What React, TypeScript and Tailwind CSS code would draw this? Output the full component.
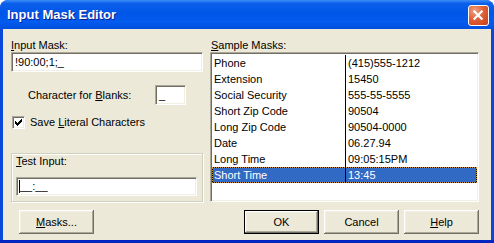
import React from "react";

const sunken =
  "bg-white border border-t-[#ACA899] border-l-[#ACA899] border-r-white border-b-white shadow-[inset_1px_1px_0_#716F64,inset_-1px_-1px_0_#F1EFE2]";

const btnShadow =
  "shadow-[inset_-1px_-1px_0_#716F64,inset_1px_1px_0_#FFFFFF,inset_-2px_-2px_0_#ACA899,inset_2px_2px_0_#F1EFE2]";

function Btn({ children, def = false }: { children: React.ReactNode; def?: boolean }) {
  return (
    <div
      className={
        "w-[75px] h-[24px] bg-[#ECE9D8] flex items-center justify-center text-black " +
        (def ? "border border-black " : "") +
        btnShadow
      }
    >
      <span className="leading-[13px]">{children}</span>
    </div>
  );
}

const rows: [string, string][] = [
  ["Phone", "(415)555-1212"],
  ["Extension", "15450"],
  ["Social Security", "555-55-5555"],
  ["Short Zip Code", "90504"],
  ["Long Zip Code", "90504-0000"],
  ["Date", "06.27.94"],
  ["Long Time", "09:05:15PM"],
  ["Short Time", "13:45"],
];

export default function App() {
  return (
    <div className="w-[494px] h-[243px] bg-[#0A48DC] rounded-t-[8px] flex flex-col overflow-hidden font-['Liberation_Sans',Arial,sans-serif] text-[11px] leading-[13px] text-black border-b-[3px] border-b-[#0026C2]">
      {/* Title bar */}
      <div className="h-[29px] shrink-0 flex items-center justify-between pl-[7px] pr-[5px] bg-[linear-gradient(to_bottom,#3D8EF6_0%,#0B5FEA_12%,#0056E6_45%,#035BEF_75%,#0250DE_100%)]">
        <span className="text-white font-bold text-[13px] leading-[16px] pt-[1px] [text-shadow:1px_1px_0_#0B1F8E]">
          Input Mask Editor
        </span>
        <div className="w-[21px] h-[21px] mt-[1px] rounded-[3px] border border-white bg-[radial-gradient(circle_at_30%_25%,#F0A080_0%,#E0603A_45%,#C2401A_100%)] flex items-center justify-center">
          <svg width="21" height="21" viewBox="0 0 21 21">
            <path d="M6 6 L14 14 M14 6 L6 14" stroke="#fff" strokeWidth="2.4" strokeLinecap="square" />
          </svg>
        </div>
      </div>

      {/* Client */}
      <div className="flex-1 mx-[3px] bg-[#ECE9D8] flex">
        {/* Left column */}
        <div className="w-[192px] ml-[8px] flex flex-col pt-[10px]">
          <div className="h-[13px]">
            <span className="underline underline-offset-[1px]">I</span>nput Mask:
          </div>
          <div className={"h-[20px] flex items-center pl-[3px] " + sunken}>!90:00;1;_</div>

          <div className="mt-[13px] flex items-center justify-between px-[17px]">
            <span>
              Character for <span className="underline underline-offset-[1px]">B</span>lanks:
            </span>
            <div className={"w-[31px] h-[20px] flex items-center pl-[3px] " + sunken}>_</div>
          </div>

          <div className="mt-[11px] flex items-center pl-[1px] gap-[5px]">
            <div className={"w-[13px] h-[13px] relative " + sunken}>
              <svg className="absolute left-[-1px] top-[-1px]" width="13" height="13" viewBox="0 0 13 13" shapeRendering="crispEdges">
                <rect x="3" y="5" width="1" height="3" fill="#000" />
                <rect x="4" y="6" width="1" height="3" fill="#000" />
                <rect x="5" y="7" width="1" height="3" fill="#000" />
                <rect x="6" y="6" width="1" height="3" fill="#000" />
                <rect x="7" y="5" width="1" height="3" fill="#000" />
                <rect x="8" y="4" width="1" height="3" fill="#000" />
                <rect x="9" y="3" width="1" height="3" fill="#000" />
              </svg>
            </div>
            <span>
              Save <span className="underline underline-offset-[1px]">L</span>iteral Characters
            </span>
          </div>

          {/* Group box */}
          <div className="mt-[24px] h-[49px] border border-[#D0D0BF] shadow-[inset_1px_1px_0_#FFFFFF,1px_1px_0_#FFFFFF] flex flex-col pl-[4px] pr-[5px]">
            <div className="h-[13px] mt-[1px]">
              <span className="underline underline-offset-[1px]">T</span>est Input:
            </div>
            <div className={"mt-[9px] h-[19px] flex items-center pl-[2px] " + sunken}>
              <span className="w-[1px] h-[13px] bg-black mr-[0px]" />
              <span>__:__</span>
            </div>
          </div>

          <div className="mt-[8px] ml-[8px]">
            <Btn>
              <span className="underline underline-offset-[1px]">M</span>asks...
            </Btn>
          </div>
        </div>

        {/* Right column */}
        <div className="w-[269px] ml-[7px] flex flex-col pt-[10px]">
          <div className="h-[13px] pl-[1px]">
            <span className="underline underline-offset-[1px]">S</span>ample Masks:
          </div>
          <div className={"h-[150px] p-[1px] pt-[1px] " + sunken}>
            <div className="flex flex-col pt-[1px]">
              {rows.map(([a, b], i) => {
                const sel = i === rows.length - 1;
                return (
                  <div
                    key={a}
                    className={
                      "h-[16px] flex " +
                      (sel
                        ? "bg-[#316AC5] text-white outline outline-1 outline-dotted outline-[#CE953A] outline-offset-[-1px] shadow-[inset_0_0_0_1px_#000]"
                        : "")
                    }
                  >
                    <div className="w-[133px] pl-[2px] flex items-center">{a}</div>
                    <div className="flex-1 border-l border-black pl-[2px] flex items-center">{b}</div>
                  </div>
                );
              })}
            </div>
          </div>
          <div className="mt-[8px] flex justify-end gap-[5px]">
            <Btn def>OK</Btn>
            <Btn>Cancel</Btn>
            <Btn>
              <span className="underline underline-offset-[1px]">H</span>elp
            </Btn>
          </div>
        </div>
      </div>
    </div>
  );
}
